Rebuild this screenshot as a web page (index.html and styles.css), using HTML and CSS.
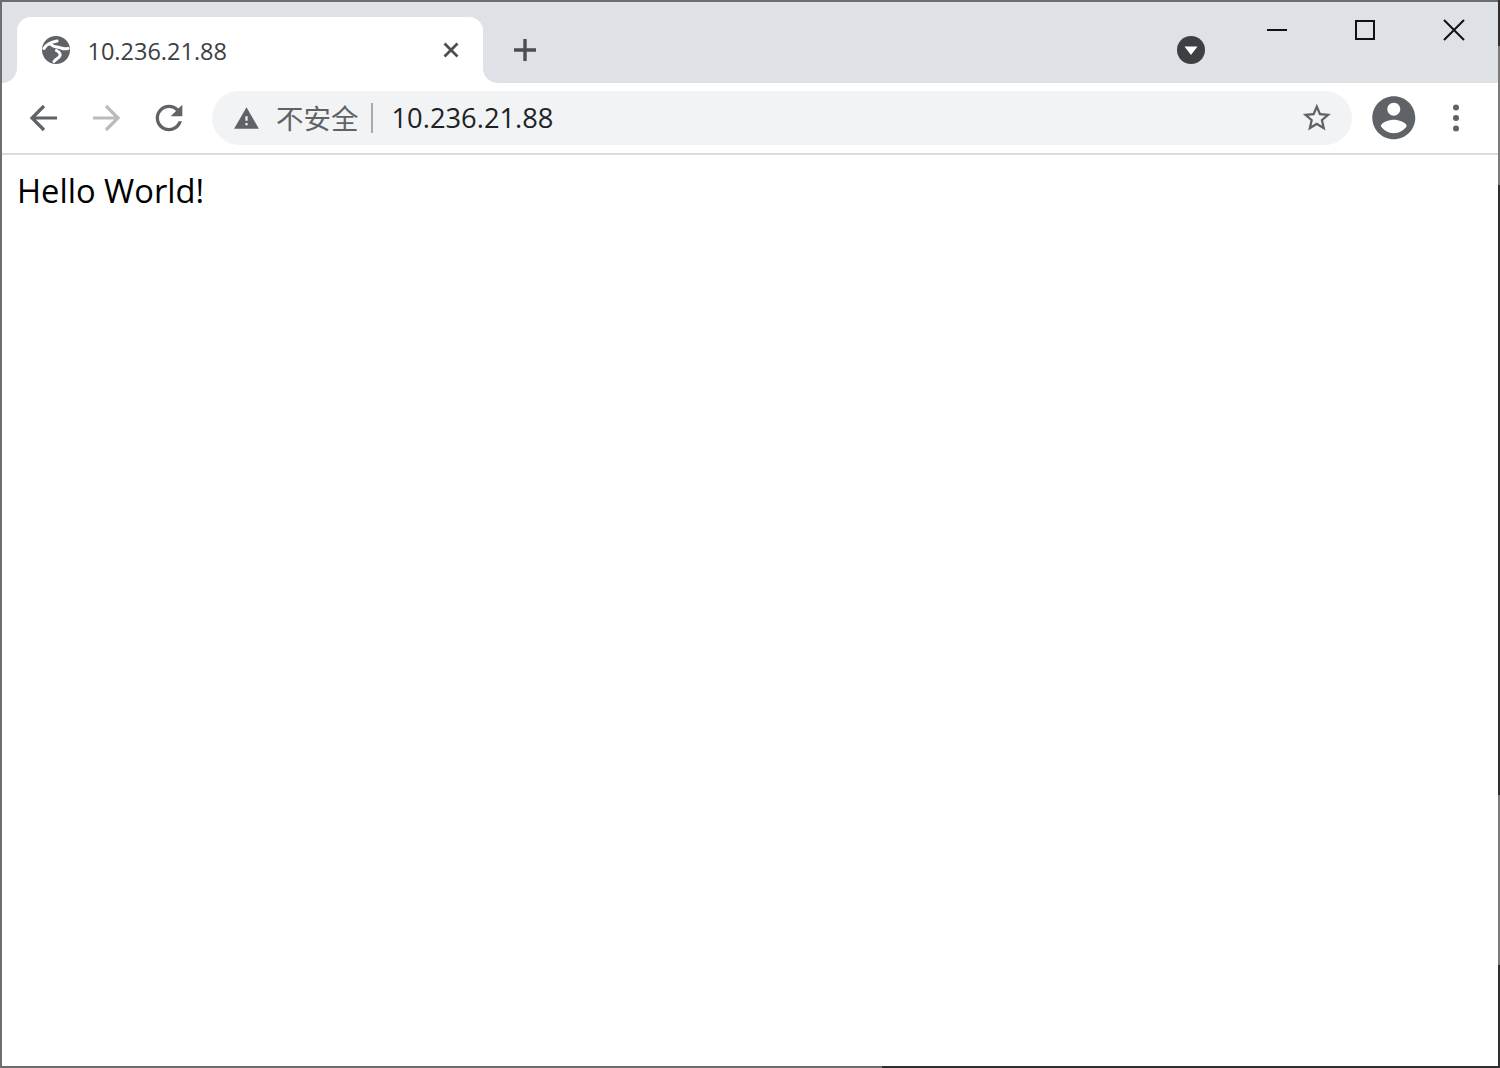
FILE: index.html
```html
<!DOCTYPE html>
<html lang="zh-CN">
<head>
<meta charset="utf-8">
<title>10.236.21.88</title>
<link rel="stylesheet" href="styles.css">
</head>
<body>
<div class="window">
  <header class="tabstrip">
    <div class="tab">
      <svg class="globe" viewBox="0 0 28 28"><circle cx="14" cy="14" r="14"/><path class="swoosh" d="M2 12.500C4 9 9 6 15 5M9 8.500c3 3 8 2.500 10 3.500 2 .8 4 1 7 .5M14.500 14.500c2 1 4 3 3.500 5-.5 2.500-4 3-6 6"/></svg>
      <span class="tab-title">10.236.21.88</span>
      <svg class="tab-close" viewBox="0 0 16 16"><path d="M1.500 1.500l13 13M14.500 1.500l-13 13"/></svg>
    </div>
    <svg class="new-tab" viewBox="0 0 24 24"><path d="M12 1v22M1 12h22"/></svg>
    <div class="strip-spacer"></div>
    <svg class="tab-search" viewBox="0 0 28 28"><circle cx="14" cy="14" r="14"/><path class="tri" d="M7.500 10.500h13L14 19z"/></svg>
    <div class="win-controls">
      <svg class="win-btn" viewBox="0 0 24 24"><path d="M2 12h20"/></svg>
      <svg class="win-btn" viewBox="0 0 24 24"><path d="M3 3h18v18H3z"/></svg>
      <svg class="win-btn" viewBox="0 0 24 24"><path d="M2 2l20 20M22 2L2 22"/></svg>
    </div>
  </header>
  <nav class="toolbar">
    <svg class="nav-btn" viewBox="0 0 40 40"><path d="M33 20H9M20 8L8 20l12 12"/></svg>
    <svg class="nav-btn nav-off" viewBox="0 0 40 40"><path d="M7 20h24M20 8l12 12-12 12"/></svg>
    <svg class="reload" viewBox="0 0 24 24"><path d="M17.65 6.35C16.2 4.9 14.21 4 12 4c-4.42 0-7.99 3.58-7.99 8s3.57 8 7.99 8c3.73 0 6.84-2.55 7.73-6h-2.08c-.82 2.33-3.04 4-5.65 4-3.31 0-6-2.69-6-6s2.69-6 6-6c1.66 0 3.14.69 4.22 1.78L13 11h7V4l-2.35 2.35z"/></svg>
    <div class="omnibox">
      <svg class="warn" viewBox="0 0 24 24"><path d="M1 21h22L12 2 1 21zm12-3h-2v-2h2v2zm0-4h-2v-4h2v4z"/></svg>
      <span class="insecure">不安全</span>
      <span class="sep"></span>
      <span class="url">10.236.21.88</span>
      <svg class="star" viewBox="0 0 24 24"><path d="M22 9.24l-7.19-.62L12 2 9.19 8.63 2 9.24l5.46 4.73L5.82 21 12 17.27 18.18 21l-1.63-7.03L22 9.24zM12 15.4l-3.76 2.27 1-4.28-3.32-2.88 4.38-.38L12 6.1l1.71 4.04 4.38.38-3.32 2.88 1 4.28L12 15.4z"/></svg>
    </div>
    <svg class="avatar" viewBox="0 0 24 24"><path d="M12 2C6.48 2 2 6.48 2 12s4.48 10 10 10 10-4.48 10-10S17.52 2 12 2zm0 3c1.66 0 3 1.34 3 3s-1.34 3-3 3-3-1.34-3-3 1.34-3 3-3zm0 14.2c-2.5 0-4.71-1.28-6-3.22.03-1.99 4-3.08 6-3.08 1.99 0 5.97 1.09 6 3.08-1.29 1.94-3.5 3.22-6 3.22z"/></svg>
    <svg class="menu" viewBox="0 0 8 28"><circle cx="4" cy="3.500" r="3"/><circle cx="4" cy="14" r="3"/><circle cx="4" cy="24.500" r="3"/></svg>
  </nav>
  <main class="page">Hello World!</main>
</div>
</body>
</html>
```
FILE: styles.css
```css
* { box-sizing: border-box; }
html, body { margin: 0; height: 100%; background: #fff; }
svg { display: block; flex: none; }

.window {
  height: 1068px;
  display: flex;
  flex-direction: column;
  padding: 2px;
  background:
    linear-gradient(to bottom, #2f2f2f 46px, #7a7a7a 46px, #7a7a7a 185px, #2f2f2f 185px, #2f2f2f 795px, #7a7a7a 795px, #7a7a7a 965px, #2f2f2f 965px) right top / 2px 100% no-repeat,
    linear-gradient(to right, #6e6e6e 882px, #2f2f2f 882px) left bottom / 100% 2px no-repeat,
    #6c6e71;
  font-family: "Open Sans", "Noto Sans", "Noto Sans CJK SC", sans-serif;
  overflow: hidden;
}

.tabstrip {
  height: 81px;
  flex: none;
  display: flex;
  align-items: flex-start;
  padding: 15px 0 0 15px;
  background: #dee1e6;
}

.tab {
  position: relative;
  width: 466px;
  height: 66px;
  display: flex;
  align-items: center;
  padding: 0 24px 0 24px;
  background: #fff;
  border-radius: 14px 14px 0 0;
}
.tab::before, .tab::after {
  content: "";
  position: absolute;
  bottom: 0;
  width: 15px;
  height: 15px;
}
.tab::before {
  left: -15px;
  background: radial-gradient(circle at 0 0, #dee1e6 14.5px, #fff 15.5px);
}
.tab::after {
  right: -15px;
  background: radial-gradient(circle at 100% 0, #dee1e6 14.5px, #fff 15.5px);
}

.globe { width: 28px; height: 28px; fill: #5f6368; margin-left: 0.5px; }
.globe .swoosh { fill: none; stroke: #fff; stroke-width: 3; stroke-linecap: round; stroke-linejoin: round; }
.tab-title {
  margin-left: 18px;
  flex: 1;
  font-size: 23.5px;
  line-height: 34px;
  padding-top: 2px;
  color: #3c4043;
}
.tab-close { width: 16px; height: 16px; fill: none; stroke: #4b4f53; stroke-width: 2.8; }

.new-tab {
  width: 24px;
  height: 24px;
  margin: 21px 0 0 30px;
  fill: none;
  stroke: #4a4d51;
  stroke-width: 3.4;
}
.strip-spacer { flex: 1; }
.tab-search { width: 28px; height: 28px; margin: 19px 60px 0 0; fill: #3c4043; }
.tab-search .tri { fill: #fff; }

.win-controls {
  display: flex;
  gap: 64px;
  padding: 1px 32px 0 0;
}
.win-btn { width: 24px; height: 24px; fill: none; stroke: #111; stroke-width: 2; }
.win-btn:last-child { margin-left: 1px; }

.toolbar {
  height: 72px;
  flex: none;
  display: flex;
  align-items: center;
  padding: 0 0 0 22px;
  background: #fff;
  border-bottom: 2px solid #dadce0;
}
.nav-btn { width: 40px; height: 40px; fill: none; stroke: #5f6368; stroke-width: 3.2; margin-right: 22px; }
.nav-off { stroke: #b9bbbd; margin-right: 23px; }
.reload { width: 40px; height: 40px; fill: #5f6368; }

.omnibox {
  width: 1140px;
  height: 54px;
  margin: 0 16px 0 23px;
  border-radius: 27px;
  background: #f1f3f4;
  display: flex;
  align-items: center;
  padding: 0 18px 0 21px;
}
.warn { width: 27px; height: 27px; fill: #5f6368; }
.insecure {
  margin-left: 16px;
  padding-bottom: 2px;
  font-family: "Noto Sans CJK SC", sans-serif;
  font-size: 27.5px;
  color: #5f6368;
}
.sep { width: 2px; height: 30px; margin-left: 12px; background: #a8aaad; }
.url {
  margin-left: 19px;
  padding-bottom: 2px;
  flex: 1;
  font-size: 27.3px;
  color: #202124;
}
.star { width: 33.6px; height: 33.6px; fill: #5f6368; }

.avatar { width: 51.6px; height: 51.6px; fill: #5f6368; }
.menu { width: 8px; height: 28px; margin-left: 32px; fill: #5f6368; }

.page {
  flex: 1;
  padding: 16px 15px;
  font-size: 32.7px;
  line-height: 40px;
  color: #000;
  background: #fff;
}
```
